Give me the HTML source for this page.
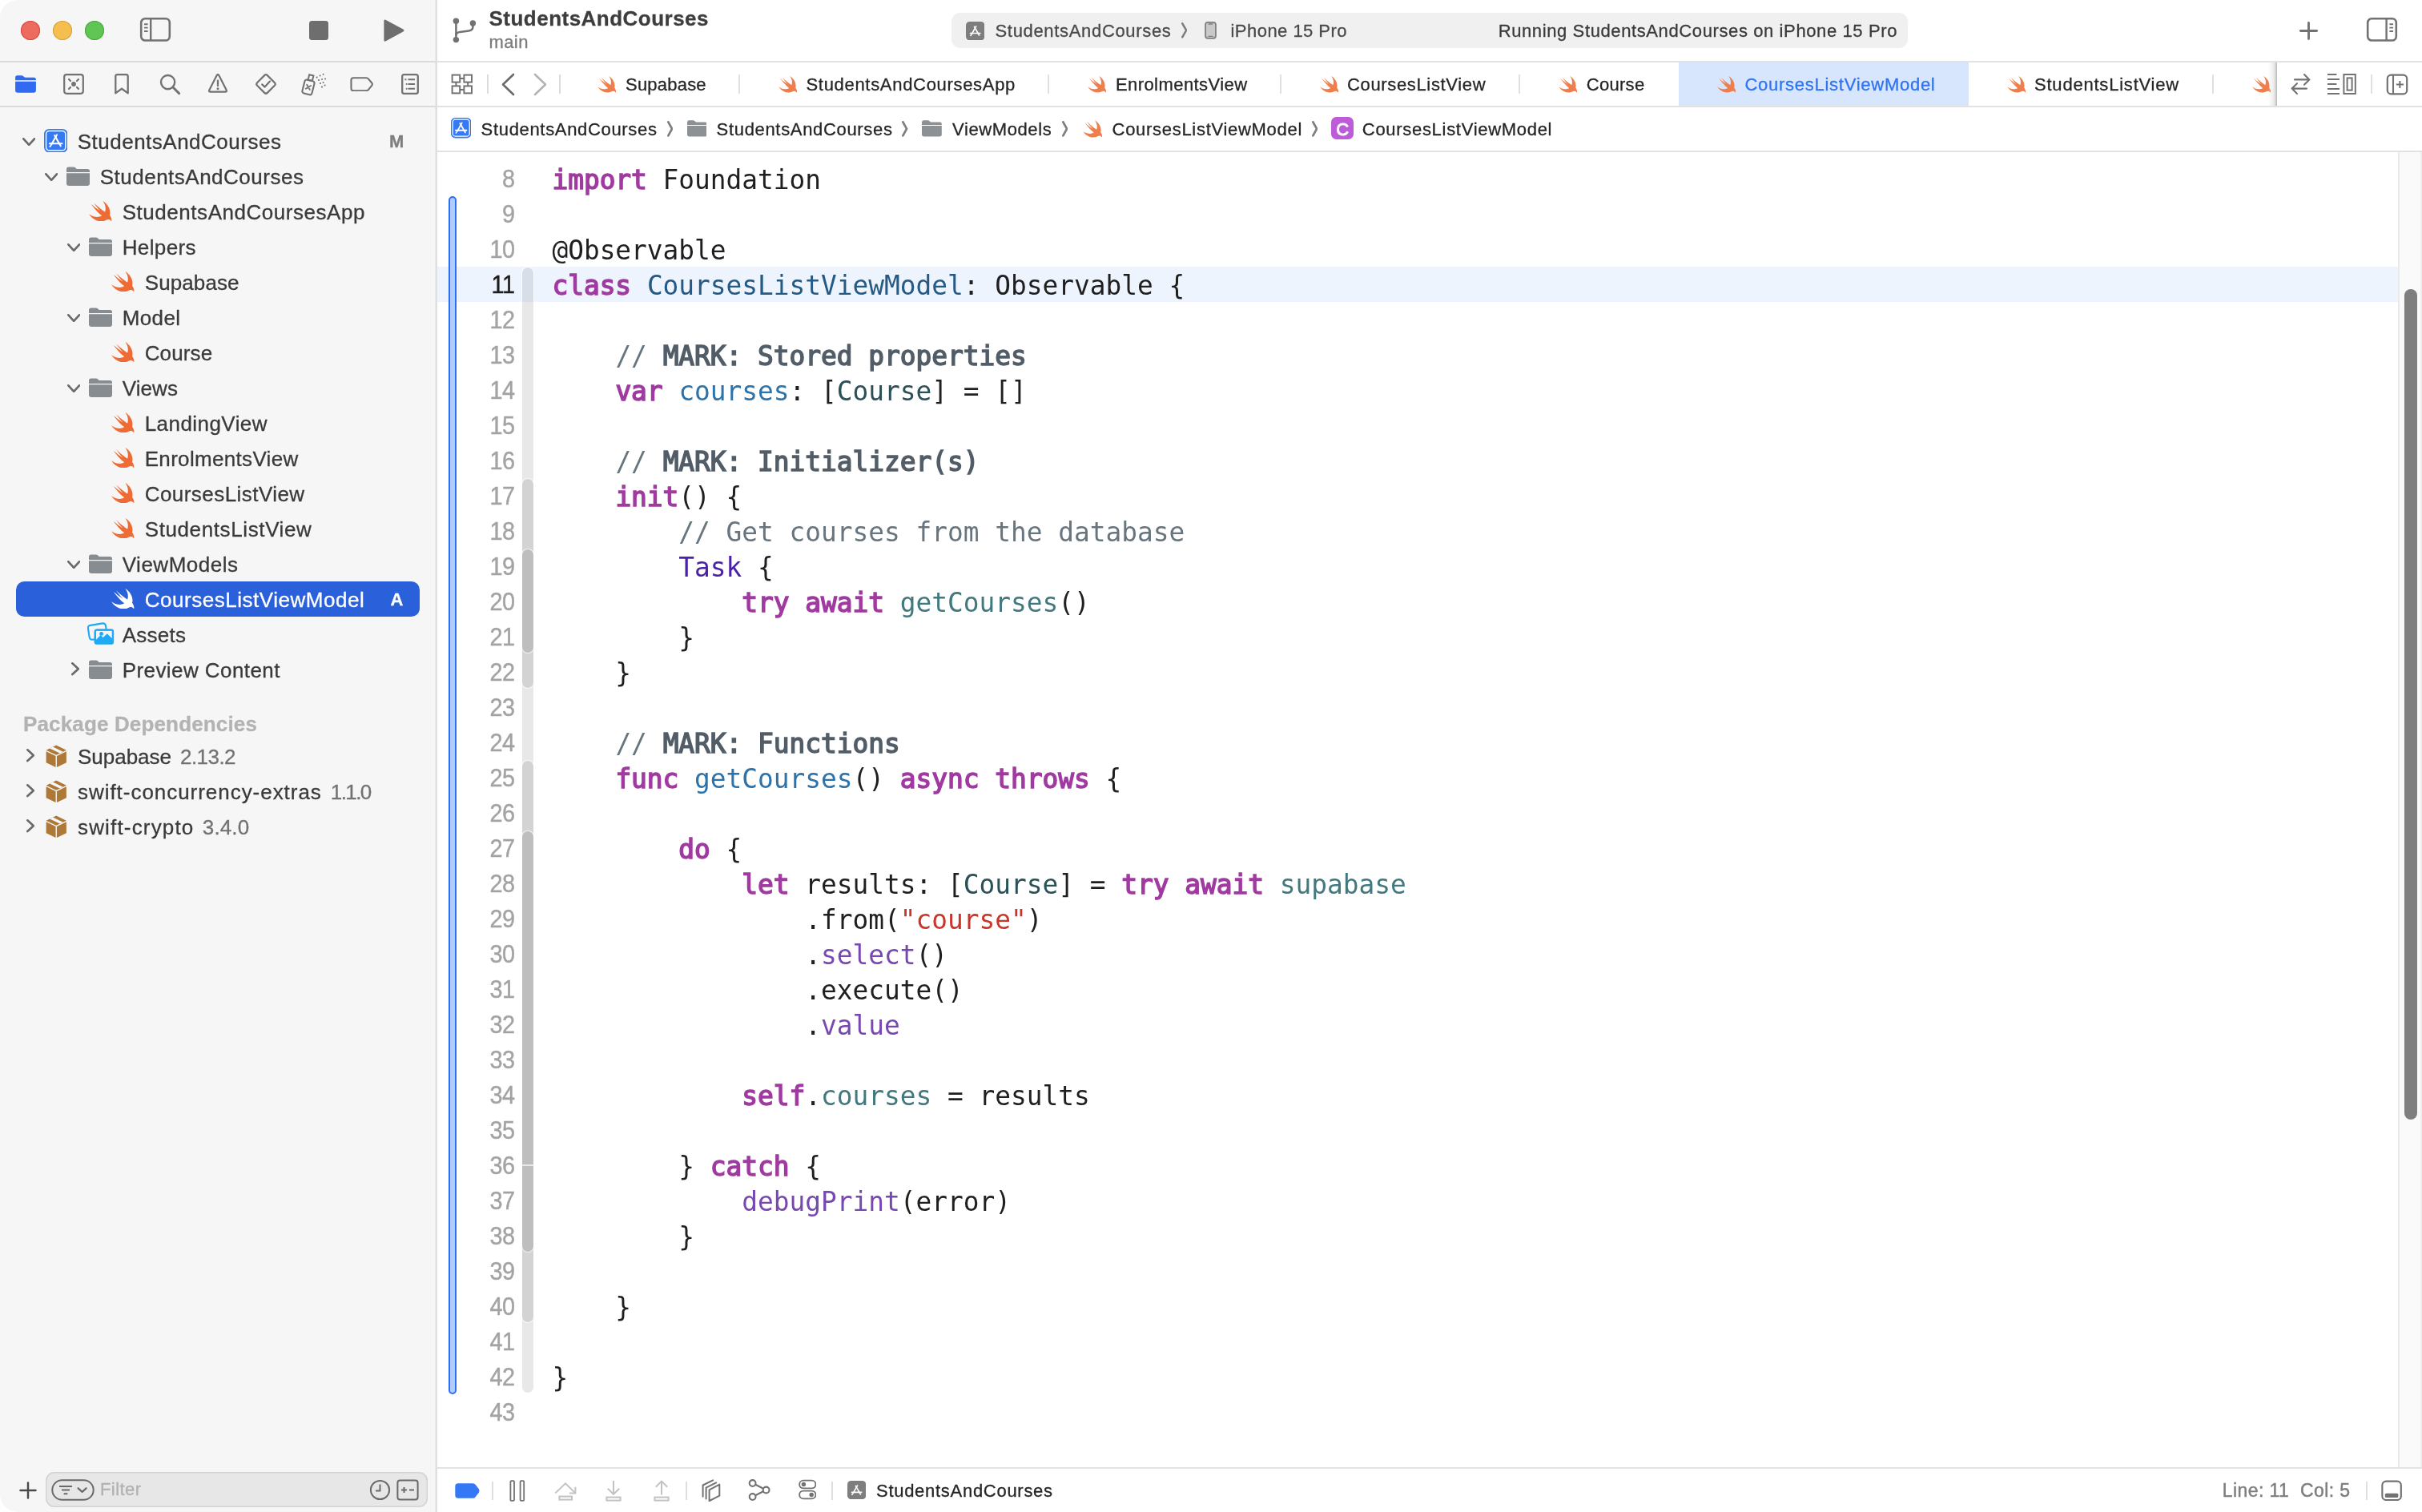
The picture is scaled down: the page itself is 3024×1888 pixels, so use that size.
<!DOCTYPE html>
<html lang="en"><head><meta charset="utf-8"><title>StudentsAndCourses — CoursesListViewModel.swift</title>
<style>
html,body{margin:0;padding:0;background:#fff;}
body{width:3024px;height:1888px;overflow:hidden;font-family:"Liberation Sans", sans-serif;}
#win{transform:translateZ(0);will-change:transform;position:relative;width:3024px;height:1888px;overflow:hidden;border-radius:22px;background:#fff;}
#win>div,#win>svg,#win>span{position:absolute;display:block;}
.t{white-space:pre;-webkit-text-stroke:0.3px;}
.ln{left:546px;width:96.4px;margin-top:0px;height:44px;line-height:44px;text-align:right;font-size:32px;color:#a3a3a3;letter-spacing:-0.6px;transform:scaleX(0.9);transform-origin:100% 50%;-webkit-text-stroke:0.45px;}
.ln.cur{color:#1d1d1f;}
.cl{left:689.4px;margin-top:1.5px;height:44px;line-height:44px;white-space:pre;font-family:"DejaVu Sans Mono", "Liberation Mono", monospace;font-size:32.8px;color:#1f1f1f;}
.kw{color:#a03aa0;-webkit-text-stroke:1.5px #a03aa0;}
.tyd{color:#245a85;} .decl{color:#2b73aa;} .ptype{color:#2a5157;} .pfn{color:#42797f;}
.ocls{color:#4a22a8;} .ofn{color:#7747b2;} .str{color:#c9362a;} .com{color:#67757f;} .mark{color:#525d68;-webkit-text-stroke:1.5px #525d68;}
</style></head>
<body><div id="win">
<div style="left:0px;top:0px;width:544px;height:1888px;background:#f6f6f6"></div>
<div style="left:543px;top:0px;width:3px;height:1888px;background:linear-gradient(90deg,#eeeeee,#dedede 60%,#dcdcdc)"></div>
<div style="left:0px;top:76px;width:544px;height:2px;background:#dadada"></div>
<div style="left:546px;top:76px;width:2478px;height:2px;background:#e2e2e2"></div>
<div style="left:0px;top:132px;width:544px;height:2px;background:#dadada"></div>
<div style="left:546px;top:132px;width:2478px;height:2px;background:#e2e2e2"></div>
<div style="left:546px;top:188px;width:2478px;height:2px;background:#e2e2e2"></div>
<div style="left:546px;top:1832px;width:2478px;height:2px;background:#e2e2e2"></div>
<div style="left:26px;top:26px;width:24px;height:24px;border-radius:50%;background:#ed6a5f;box-shadow:inset 0 0 0 1px #d5493c"></div>
<div style="left:66px;top:26px;width:24px;height:24px;border-radius:50%;background:#f5bf4f;box-shadow:inset 0 0 0 1px #d6a13a"></div>
<div style="left:106px;top:26px;width:24px;height:24px;border-radius:50%;background:#61c555;box-shadow:inset 0 0 0 1px #4ca73d"></div>
<svg style="left:174px;top:21px" width="40" height="32" viewBox="0 0 40 32" ><rect x="2.2" y="2.3" width="35.6" height="27.2" rx="5" fill="none" stroke="#727272" stroke-width="2.6"/><path d="M14.2 2.5V29.5" stroke="#727272" stroke-width="2.4"/><path d="M6 9.2H10.6M6 13.6H10.6M6 18H10.6" stroke="#727272" stroke-width="1.9"/></svg>
<div style="left:386px;top:26px;width:24px;height:24px;background:#6e6e6e;border-radius:3.5px"></div>
<svg style="left:477px;top:22.6px" width="30" height="30.8" viewBox="0 0 29 30" ><path d="M2.2 3.2Q2.2 0.6 4.6 1.9L25.6 13.2Q27.8 14.6 25.6 16L4.6 27.6Q2.2 28.8 2.2 26.2Z" fill="#6e6e6e"/></svg>
<svg style="left:563px;top:21px" width="34" height="34" viewBox="0 0 34 34" ><g fill="none" stroke="#727272" stroke-width="2.5"><path d="M6.4 7.5V26.5"/><path d="M27.4 10.4V12.6Q27.4 17 22.4 17.6L11 19Q6.4 19.6 6.4 23.4"/></g><circle cx="6.4" cy="5.2" r="3.7" fill="#727272"/><circle cx="6.4" cy="28.6" r="3.7" fill="#727272"/><circle cx="27.4" cy="8" r="3.7" fill="#727272"/></svg>
<span class="t" style="left:610.5px;top:10.19px;font-size:26px;line-height:26px;color:#3d3d3d;font-weight:700;letter-spacing:0.483px;">StudentsAndCourses</span>
<span class="t" style="left:610.5px;top:41.88px;font-size:22px;line-height:22px;color:#7b7b7b;letter-spacing:0.4px;">main</span>
<div style="left:1188px;top:16px;width:1194px;height:43.5px;background:#f0f0f0;border-radius:11px"></div>
<svg style="left:1206px;top:26.5px" width="23.4" height="23.4" viewBox="0 0 30 30" ><rect x="0" y="0" width="30" height="30" rx="6" fill="#7e7e7e"/><g stroke="#fff" stroke-width="2.1" stroke-linecap="round" fill="none"><path d="M16.3 7.6L9.2 20.2"/><path d="M13.4 8.2L21.2 21.8"/><path d="M7 18.6H23"/><path d="M8.2 21.4L7.6 22.4"/></g></svg>
<span class="t" style="left:1242.5px;top:28.38px;font-size:22px;line-height:22px;color:#4a4a4a;letter-spacing:0.672px;">StudentsAndCourses</span>
<svg style="left:1475px;top:28.2px" width="7.4" height="19.6" viewBox="0 0 7.4 19.6" ><path d="M1.25 1.25L6.15 9.8L1.25 18.35" fill="none" stroke="#7c7c7c" stroke-width="2.5" stroke-linecap="round" stroke-linejoin="round"/></svg>
<svg style="left:1504.4px;top:26.3px" width="15" height="23.6" viewBox="0 0 17 25" ><rect x="1.2" y="1.2" width="14.6" height="22.6" rx="3.4" fill="#c9c9c9" stroke="#7e7e7e" stroke-width="2"/><path d="M6 3.6H11" stroke="#7e7e7e" stroke-width="1.6" stroke-linecap="round"/><path d="M5.4 21H11.6" stroke="#7e7e7e" stroke-width="1.4" stroke-linecap="round"/></svg>
<span class="t" style="left:1536.5px;top:28.38px;font-size:22px;line-height:22px;color:#4a4a4a;letter-spacing:0.466px;">iPhone 15 Pro</span>
<span class="t" style="left:1870.7px;top:28.38px;font-size:22px;line-height:22px;color:#3a3a3a;letter-spacing:0.609px;">Running StudentsAndCourses on iPhone 15 Pro</span>
<svg style="left:2869.5px;top:25.5px" width="25" height="25" viewBox="0 0 25 25" ><path d="M12.5 2.4V22.6M2.4 12.5H22.6" stroke="#727272" stroke-width="2.9" stroke-linecap="round"/></svg>
<svg style="left:2954px;top:21px" width="40" height="32" viewBox="0 0 40 32" ><rect x="2.2" y="2.3" width="35.6" height="27.2" rx="5" fill="none" stroke="#727272" stroke-width="2.6"/><path d="M25.6 2.5V29.5" stroke="#727272" stroke-width="2.4"/><path d="M29.4 9.2H34M29.4 13.6H34M29.4 18H34" stroke="#727272" stroke-width="1.9"/></svg>
<svg style="left:19px;top:94px" width="26" height="22" viewBox="0 0 27 23" ><path d="M0 3Q0 0.2 2.8 0.2H8Q9.6 0.2 10.6 1.2L11.4 2Q12.2 2.8 13.4 2.8H24.2Q27 2.8 27 5.6V6.6H0Z" fill="#2f6af0"/><path d="M0 8H27V19.6Q27 22.8 23.8 22.8H3.2Q0 22.8 0 19.6Z" fill="#2f6af0"/></svg>
<svg style="left:78px;top:91px" width="28" height="28" viewBox="0 0 28 28" ><rect x="2.2" y="2.2" width="23.6" height="23.6" rx="3" fill="none" stroke="#727272" stroke-width="2.2"/><path d="M8 8L10 10M20 8L18 10M8 20L10 18M20 20L18 18" stroke="#727272" stroke-width="2.2" stroke-linecap="round"/><circle cx="14" cy="14" r="2.9" fill="#727272"/></svg>
<svg style="left:142px;top:91px" width="20" height="28" viewBox="0 0 20 28" ><path d="M2.3 4.4Q2.3 2.2 4.5 2.2H15.5Q17.7 2.2 17.7 4.4V25.4L10 19.8L2.3 25.4Z" fill="none" stroke="#727272" stroke-width="2.3" stroke-linejoin="round"/></svg>
<svg style="left:198.5px;top:91.5px" width="27" height="27" viewBox="0 0 27 27" ><circle cx="10.6" cy="10.6" r="8.6" fill="none" stroke="#727272" stroke-width="2.4"/><path d="M17 17L24.6 24.6" stroke="#727272" stroke-width="2.9" stroke-linecap="round"/></svg>
<svg style="left:259px;top:91px" width="26" height="26" viewBox="0 0 26 26" ><path d="M13 2.2Q13.8 2.2 14.3 3.1L23.7 21.5Q24.6 23.6 22.4 23.6H3.6Q1.4 23.6 2.3 21.5L11.7 3.1Q12.2 2.2 13 2.2Z" fill="none" stroke="#727272" stroke-width="2.2" stroke-linejoin="round"/><path d="M13 9.6V16" stroke="#727272" stroke-width="2.3" stroke-linecap="round"/><circle cx="13" cy="19.8" r="1.5" fill="#727272"/></svg>
<svg style="left:318px;top:91px" width="28" height="28" viewBox="0 0 28 28" ><path d="M14 2.2Q14.9 2.2 15.8 3.1L24.9 12.2Q26.6 14 24.9 15.8L15.8 24.9Q14 26.6 12.2 24.9L3.1 15.8Q1.4 14 3.1 12.2L12.2 3.1Q13.1 2.2 14 2.2Z" fill="none" stroke="#727272" stroke-width="2.2"/><path d="M9.2 14.4L12.6 17.6L19 10.6" fill="none" stroke="#727272" stroke-width="2.2" stroke-linecap="round" stroke-linejoin="round"/></svg>
<svg style="left:376px;top:90.5px" width="32" height="29" viewBox="0 0 32 29" ><g transform="rotate(14 9 17)"><rect x="3" y="9.2" width="12.4" height="17.4" rx="2.6" fill="none" stroke="#727272" stroke-width="2.1"/><rect x="6.6" y="2.4" width="5.4" height="6.6" fill="none" stroke="#727272" stroke-width="2"/><path d="M6.6 15.2L11.8 20.4M11.8 15.2L6.6 20.4" stroke="#727272" stroke-width="1.8" stroke-linecap="round"/></g><g fill="#727272"><circle cx="19.6" cy="5.6" r="1.1"/><circle cx="23.6" cy="3.6" r="1"/><circle cx="27.6" cy="1.8" r="1"/><circle cx="22" cy="9" r="1.1"/><circle cx="26" cy="8" r="1"/><circle cx="30" cy="7.6" r="1"/><circle cx="24" cy="13" r="1.1"/><circle cx="27.6" cy="12" r="1"/><circle cx="29.6" cy="15.4" r="1"/><circle cx="26" cy="17.6" r="1.1"/></g></svg>
<svg style="left:437px;top:96px" width="30" height="18.4" viewBox="0 0 32 20" ><path d="M4.2 1.3H21.8Q23.6 1.3 24.8 2.8L29.4 8.4Q30.6 10 29.4 11.6L24.8 17.2Q23.6 18.7 21.8 18.7H4.2Q1.3 18.7 1.3 15.8V4.2Q1.3 1.3 4.2 1.3Z" fill="none" stroke="#727272" stroke-width="2.3"/></svg>
<svg style="left:500px;top:91px" width="24" height="28" viewBox="0 0 24 28" ><rect x="2.2" y="2.2" width="19.6" height="23.6" rx="2.4" fill="none" stroke="#727272" stroke-width="2.3"/><path d="M9.4 8.2H18M9.4 14H18M9.4 19.8H18" stroke="#727272" stroke-width="2"/><path d="M5.4 8.2H7.4M6.8 14H8.4M6.8 19.8H8.4" stroke="#727272" stroke-width="2"/></svg>
<svg style="left:27.8px;top:171.9px" width="16.4" height="10.2" viewBox="0 0 16.4 10.2" ><path d="M1.35 1.35L8.2 8.85L15.049999999999999 1.35" fill="none" stroke="#6a6a6a" stroke-width="2.7" stroke-linecap="round" stroke-linejoin="round"/></svg>
<svg style="left:54.5px;top:160.7px" width="29.4" height="29.4" viewBox="0 0 30 30" ><rect x="0" y="0" width="30" height="30" rx="6.5" fill="#3579f3"/><rect x="2.6" y="2.6" width="24.8" height="24.8" rx="4.2" fill="none" stroke="#fff" stroke-width="1.5"/><g stroke="#fff" stroke-width="2.1" stroke-linecap="round" fill="none"><path d="M16.3 7.6L9.2 20.2"/><path d="M13.4 8.2L21.2 21.8"/><path d="M7 18.6H23"/><path d="M8.2 21.4L7.6 22.4"/></g></svg>
<span class="t" style="left:96.7px;top:163.59px;font-size:26px;line-height:26px;color:#3a3a3a;letter-spacing:0.499px;">StudentsAndCourses</span>
<span class="t" style="left:486px;top:166.38px;font-size:22px;line-height:22px;color:#7f7f7f;font-weight:700;">M</span>
<svg style="left:55.8px;top:215.9px" width="16.4" height="10.2" viewBox="0 0 16.4 10.2" ><path d="M1.35 1.35L8.2 8.85L15.049999999999999 1.35" fill="none" stroke="#6a6a6a" stroke-width="2.7" stroke-linecap="round" stroke-linejoin="round"/></svg>
<svg style="left:83.0px;top:208.0px" width="29" height="24.0" viewBox="0 0 29 24" ><path d="M0 3.2Q0 0.4 2.8 0.4H8.6Q10.2 0.4 11.2 1.4L12.2 2.4Q12.9 3 14 3H26.2Q29 3 29 5.8V7H0Z" fill="#878c91"/><path d="M0 8.3H29V20.8Q29 24 25.8 24H3.2Q0 24 0 20.8Z" fill="#878c91"/></svg>
<span class="t" style="left:124.7px;top:207.59px;font-size:26px;line-height:26px;color:#3a3a3a;letter-spacing:0.499px;">StudentsAndCourses</span>
<svg style="left:111.4px;top:250.71px" width="28.6" height="25.79" viewBox="2.38 3.38 18.3 16.5" ><path d="M13.543 3.41c4.114 2.47 6.545 7.162 5.549 11.131-.024.093-.05.181-.076.272l.002.001c2.062 2.538 1.5 5.258 1.236 4.745-1.072-2.086-3.066-1.568-4.088-1.043a6.803 6.803 0 0 1-.281.158l-.02.012-.002.002c-2.115 1.123-4.957 1.205-7.812-.022a12.568 12.568 0 0 1-5.64-4.838c.649.48 1.35.902 2.097 1.252 3.019 1.414 6.051 1.311 8.197-.002C9.651 12.73 7.101 9.67 5.146 7.191a10.628 10.628 0 0 1-1.005-1.384c2.34 2.142 6.038 4.83 7.365 5.576C8.69 8.408 6.208 4.743 6.324 4.86c4.436 4.47 8.528 6.996 8.528 6.996.154.085.27.154.36.214.085-.215.16-.437.224-.668.708-2.588-.09-5.548-1.893-7.992z" fill="#ef6b36"/></svg>
<span class="t" style="left:152.7px;top:251.59px;font-size:26px;line-height:26px;color:#3a3a3a;letter-spacing:0.54px;">StudentsAndCoursesApp</span>
<svg style="left:83.8px;top:303.9px" width="16.4" height="10.2" viewBox="0 0 16.4 10.2" ><path d="M1.35 1.35L8.2 8.85L15.049999999999999 1.35" fill="none" stroke="#6a6a6a" stroke-width="2.7" stroke-linecap="round" stroke-linejoin="round"/></svg>
<svg style="left:111.0px;top:296.0px" width="29" height="24.0" viewBox="0 0 29 24" ><path d="M0 3.2Q0 0.4 2.8 0.4H8.6Q10.2 0.4 11.2 1.4L12.2 2.4Q12.9 3 14 3H26.2Q29 3 29 5.8V7H0Z" fill="#878c91"/><path d="M0 8.3H29V20.8Q29 24 25.8 24H3.2Q0 24 0 20.8Z" fill="#878c91"/></svg>
<span class="t" style="left:152.7px;top:295.59px;font-size:26px;line-height:26px;color:#3a3a3a;letter-spacing:0.372px;">Helpers</span>
<svg style="left:139.4px;top:338.71px" width="28.6" height="25.79" viewBox="2.38 3.38 18.3 16.5" ><path d="M13.543 3.41c4.114 2.47 6.545 7.162 5.549 11.131-.024.093-.05.181-.076.272l.002.001c2.062 2.538 1.5 5.258 1.236 4.745-1.072-2.086-3.066-1.568-4.088-1.043a6.803 6.803 0 0 1-.281.158l-.02.012-.002.002c-2.115 1.123-4.957 1.205-7.812-.022a12.568 12.568 0 0 1-5.64-4.838c.649.48 1.35.902 2.097 1.252 3.019 1.414 6.051 1.311 8.197-.002C9.651 12.73 7.101 9.67 5.146 7.191a10.628 10.628 0 0 1-1.005-1.384c2.34 2.142 6.038 4.83 7.365 5.576C8.69 8.408 6.208 4.743 6.324 4.86c4.436 4.47 8.528 6.996 8.528 6.996.154.085.27.154.36.214.085-.215.16-.437.224-.668.708-2.588-.09-5.548-1.893-7.992z" fill="#ef6b36"/></svg>
<span class="t" style="left:180.7px;top:339.59px;font-size:26px;line-height:26px;color:#3a3a3a;letter-spacing:0.111px;">Supabase</span>
<svg style="left:83.8px;top:391.9px" width="16.4" height="10.2" viewBox="0 0 16.4 10.2" ><path d="M1.35 1.35L8.2 8.85L15.049999999999999 1.35" fill="none" stroke="#6a6a6a" stroke-width="2.7" stroke-linecap="round" stroke-linejoin="round"/></svg>
<svg style="left:111.0px;top:384.0px" width="29" height="24.0" viewBox="0 0 29 24" ><path d="M0 3.2Q0 0.4 2.8 0.4H8.6Q10.2 0.4 11.2 1.4L12.2 2.4Q12.9 3 14 3H26.2Q29 3 29 5.8V7H0Z" fill="#878c91"/><path d="M0 8.3H29V20.8Q29 24 25.8 24H3.2Q0 24 0 20.8Z" fill="#878c91"/></svg>
<span class="t" style="left:152.7px;top:383.59px;font-size:26px;line-height:26px;color:#3a3a3a;letter-spacing:0.394px;">Model</span>
<svg style="left:139.4px;top:426.71px" width="28.6" height="25.79" viewBox="2.38 3.38 18.3 16.5" ><path d="M13.543 3.41c4.114 2.47 6.545 7.162 5.549 11.131-.024.093-.05.181-.076.272l.002.001c2.062 2.538 1.5 5.258 1.236 4.745-1.072-2.086-3.066-1.568-4.088-1.043a6.803 6.803 0 0 1-.281.158l-.02.012-.002.002c-2.115 1.123-4.957 1.205-7.812-.022a12.568 12.568 0 0 1-5.64-4.838c.649.48 1.35.902 2.097 1.252 3.019 1.414 6.051 1.311 8.197-.002C9.651 12.73 7.101 9.67 5.146 7.191a10.628 10.628 0 0 1-1.005-1.384c2.34 2.142 6.038 4.83 7.365 5.576C8.69 8.408 6.208 4.743 6.324 4.86c4.436 4.47 8.528 6.996 8.528 6.996.154.085.27.154.36.214.085-.215.16-.437.224-.668.708-2.588-.09-5.548-1.893-7.992z" fill="#ef6b36"/></svg>
<span class="t" style="left:180.7px;top:427.59px;font-size:26px;line-height:26px;color:#3a3a3a;letter-spacing:0.145px;">Course</span>
<svg style="left:83.8px;top:479.9px" width="16.4" height="10.2" viewBox="0 0 16.4 10.2" ><path d="M1.35 1.35L8.2 8.85L15.049999999999999 1.35" fill="none" stroke="#6a6a6a" stroke-width="2.7" stroke-linecap="round" stroke-linejoin="round"/></svg>
<svg style="left:111.0px;top:472.0px" width="29" height="24.0" viewBox="0 0 29 24" ><path d="M0 3.2Q0 0.4 2.8 0.4H8.6Q10.2 0.4 11.2 1.4L12.2 2.4Q12.9 3 14 3H26.2Q29 3 29 5.8V7H0Z" fill="#878c91"/><path d="M0 8.3H29V20.8Q29 24 25.8 24H3.2Q0 24 0 20.8Z" fill="#878c91"/></svg>
<span class="t" style="left:152.7px;top:471.59px;font-size:26px;line-height:26px;color:#3a3a3a;letter-spacing:0.102px;">Views</span>
<svg style="left:139.4px;top:514.71px" width="28.6" height="25.79" viewBox="2.38 3.38 18.3 16.5" ><path d="M13.543 3.41c4.114 2.47 6.545 7.162 5.549 11.131-.024.093-.05.181-.076.272l.002.001c2.062 2.538 1.5 5.258 1.236 4.745-1.072-2.086-3.066-1.568-4.088-1.043a6.803 6.803 0 0 1-.281.158l-.02.012-.002.002c-2.115 1.123-4.957 1.205-7.812-.022a12.568 12.568 0 0 1-5.64-4.838c.649.48 1.35.902 2.097 1.252 3.019 1.414 6.051 1.311 8.197-.002C9.651 12.73 7.101 9.67 5.146 7.191a10.628 10.628 0 0 1-1.005-1.384c2.34 2.142 6.038 4.83 7.365 5.576C8.69 8.408 6.208 4.743 6.324 4.86c4.436 4.47 8.528 6.996 8.528 6.996.154.085.27.154.36.214.085-.215.16-.437.224-.668.708-2.588-.09-5.548-1.893-7.992z" fill="#ef6b36"/></svg>
<span class="t" style="left:180.7px;top:515.59px;font-size:26px;line-height:26px;color:#3a3a3a;letter-spacing:0.443px;">LandingView</span>
<svg style="left:139.4px;top:558.71px" width="28.6" height="25.79" viewBox="2.38 3.38 18.3 16.5" ><path d="M13.543 3.41c4.114 2.47 6.545 7.162 5.549 11.131-.024.093-.05.181-.076.272l.002.001c2.062 2.538 1.5 5.258 1.236 4.745-1.072-2.086-3.066-1.568-4.088-1.043a6.803 6.803 0 0 1-.281.158l-.02.012-.002.002c-2.115 1.123-4.957 1.205-7.812-.022a12.568 12.568 0 0 1-5.64-4.838c.649.48 1.35.902 2.097 1.252 3.019 1.414 6.051 1.311 8.197-.002C9.651 12.73 7.101 9.67 5.146 7.191a10.628 10.628 0 0 1-1.005-1.384c2.34 2.142 6.038 4.83 7.365 5.576C8.69 8.408 6.208 4.743 6.324 4.86c4.436 4.47 8.528 6.996 8.528 6.996.154.085.27.154.36.214.085-.215.16-.437.224-.668.708-2.588-.09-5.548-1.893-7.992z" fill="#ef6b36"/></svg>
<span class="t" style="left:180.7px;top:559.59px;font-size:26px;line-height:26px;color:#3a3a3a;letter-spacing:0.322px;">EnrolmentsView</span>
<svg style="left:139.4px;top:602.71px" width="28.6" height="25.79" viewBox="2.38 3.38 18.3 16.5" ><path d="M13.543 3.41c4.114 2.47 6.545 7.162 5.549 11.131-.024.093-.05.181-.076.272l.002.001c2.062 2.538 1.5 5.258 1.236 4.745-1.072-2.086-3.066-1.568-4.088-1.043a6.803 6.803 0 0 1-.281.158l-.02.012-.002.002c-2.115 1.123-4.957 1.205-7.812-.022a12.568 12.568 0 0 1-5.64-4.838c.649.48 1.35.902 2.097 1.252 3.019 1.414 6.051 1.311 8.197-.002C9.651 12.73 7.101 9.67 5.146 7.191a10.628 10.628 0 0 1-1.005-1.384c2.34 2.142 6.038 4.83 7.365 5.576C8.69 8.408 6.208 4.743 6.324 4.86c4.436 4.47 8.528 6.996 8.528 6.996.154.085.27.154.36.214.085-.215.16-.437.224-.668.708-2.588-.09-5.548-1.893-7.992z" fill="#ef6b36"/></svg>
<span class="t" style="left:180.7px;top:603.59px;font-size:26px;line-height:26px;color:#3a3a3a;letter-spacing:0.449px;">CoursesListView</span>
<svg style="left:139.4px;top:646.71px" width="28.6" height="25.79" viewBox="2.38 3.38 18.3 16.5" ><path d="M13.543 3.41c4.114 2.47 6.545 7.162 5.549 11.131-.024.093-.05.181-.076.272l.002.001c2.062 2.538 1.5 5.258 1.236 4.745-1.072-2.086-3.066-1.568-4.088-1.043a6.803 6.803 0 0 1-.281.158l-.02.012-.002.002c-2.115 1.123-4.957 1.205-7.812-.022a12.568 12.568 0 0 1-5.64-4.838c.649.48 1.35.902 2.097 1.252 3.019 1.414 6.051 1.311 8.197-.002C9.651 12.73 7.101 9.67 5.146 7.191a10.628 10.628 0 0 1-1.005-1.384c2.34 2.142 6.038 4.83 7.365 5.576C8.69 8.408 6.208 4.743 6.324 4.86c4.436 4.47 8.528 6.996 8.528 6.996.154.085.27.154.36.214.085-.215.16-.437.224-.668.708-2.588-.09-5.548-1.893-7.992z" fill="#ef6b36"/></svg>
<span class="t" style="left:180.7px;top:647.59px;font-size:26px;line-height:26px;color:#3a3a3a;letter-spacing:0.613px;">StudentsListView</span>
<svg style="left:83.8px;top:699.9px" width="16.4" height="10.2" viewBox="0 0 16.4 10.2" ><path d="M1.35 1.35L8.2 8.85L15.049999999999999 1.35" fill="none" stroke="#6a6a6a" stroke-width="2.7" stroke-linecap="round" stroke-linejoin="round"/></svg>
<svg style="left:111.0px;top:692.0px" width="29" height="24.0" viewBox="0 0 29 24" ><path d="M0 3.2Q0 0.4 2.8 0.4H8.6Q10.2 0.4 11.2 1.4L12.2 2.4Q12.9 3 14 3H26.2Q29 3 29 5.8V7H0Z" fill="#878c91"/><path d="M0 8.3H29V20.8Q29 24 25.8 24H3.2Q0 24 0 20.8Z" fill="#878c91"/></svg>
<span class="t" style="left:152.7px;top:691.59px;font-size:26px;line-height:26px;color:#3a3a3a;letter-spacing:0.52px;">ViewModels</span>
<div style="left:20px;top:726px;width:504px;height:44px;background:#2a60da;border-radius:10.5px"></div>
<svg style="left:139.4px;top:734.71px" width="28.6" height="25.79" viewBox="2.38 3.38 18.3 16.5" ><path d="M13.543 3.41c4.114 2.47 6.545 7.162 5.549 11.131-.024.093-.05.181-.076.272l.002.001c2.062 2.538 1.5 5.258 1.236 4.745-1.072-2.086-3.066-1.568-4.088-1.043a6.803 6.803 0 0 1-.281.158l-.02.012-.002.002c-2.115 1.123-4.957 1.205-7.812-.022a12.568 12.568 0 0 1-5.64-4.838c.649.48 1.35.902 2.097 1.252 3.019 1.414 6.051 1.311 8.197-.002C9.651 12.73 7.101 9.67 5.146 7.191a10.628 10.628 0 0 1-1.005-1.384c2.34 2.142 6.038 4.83 7.365 5.576C8.69 8.408 6.208 4.743 6.324 4.86c4.436 4.47 8.528 6.996 8.528 6.996.154.085.27.154.36.214.085-.215.16-.437.224-.668.708-2.588-.09-5.548-1.893-7.992z" fill="#ffffff"/></svg>
<span class="t" style="left:180.7px;top:735.59px;font-size:26px;line-height:26px;color:#ffffff;letter-spacing:0.531px;">CoursesListViewModel</span>
<span class="t" style="left:487.5px;top:738.38px;font-size:22px;line-height:22px;color:#ffffff;font-weight:700;">A</span>
<svg style="left:109.0px;top:777.1px" width="35" height="29.7" viewBox="0 0 33 28" ><g transform="rotate(-9 12 11)"><rect x="1.6" y="2.4" width="21" height="17" rx="3" fill="#f6f6f6" stroke="#1eaaf5" stroke-width="2"/></g><rect x="8.2" y="8" width="23" height="18" rx="3" fill="#1eaaf5"/><path d="M10.4 20.6L15.6 15.2L18.6 18L23.4 13.4L29 18.8V10.2H10.4Z" fill="#f6f6f6"/><rect x="9.2" y="9" width="21" height="16" rx="2.2" fill="none" stroke="#1eaaf5" stroke-width="2"/><circle cx="16.6" cy="13.6" r="2.3" fill="#1eaaf5"/></svg>
<span class="t" style="left:152.7px;top:779.59px;font-size:26px;line-height:26px;color:#3a3a3a;letter-spacing:0.245px;">Assets</span>
<svg style="left:88.9px;top:827.3px" width="10.2" height="16.4" viewBox="0 0 10.2 16.4" ><path d="M1.35 1.35L8.85 8.2L1.35 15.049999999999999" fill="none" stroke="#6a6a6a" stroke-width="2.7" stroke-linecap="round" stroke-linejoin="round"/></svg>
<svg style="left:111.0px;top:824.0px" width="29" height="24.0" viewBox="0 0 29 24" ><path d="M0 3.2Q0 0.4 2.8 0.4H8.6Q10.2 0.4 11.2 1.4L12.2 2.4Q12.9 3 14 3H26.2Q29 3 29 5.8V7H0Z" fill="#878c91"/><path d="M0 8.3H29V20.8Q29 24 25.8 24H3.2Q0 24 0 20.8Z" fill="#878c91"/></svg>
<span class="t" style="left:152.7px;top:823.59px;font-size:26px;line-height:26px;color:#3a3a3a;letter-spacing:0.429px;">Preview Content</span>
<span class="t" style="left:29px;top:890.59px;font-size:26px;line-height:26px;color:#b3b3b3;font-weight:700;letter-spacing:0.148px;">Package Dependencies</span>
<svg style="left:32.9px;top:935.3px" width="10.2" height="16.4" viewBox="0 0 10.2 16.4" ><path d="M1.35 1.35L8.85 8.2L1.35 15.049999999999999" fill="none" stroke="#6a6a6a" stroke-width="2.7" stroke-linecap="round" stroke-linejoin="round"/></svg>
<svg style="left:56.75px;top:930.23px" width="26.5" height="28.54" viewBox="0 0 26 28" ><path d="M13 0.5L25.4 6.6L13 12.4L0.6 6.6Z" fill="#ad7838"/><path d="M0.6 8.1L12.3 13.7V27.5L0.6 21.8Z" fill="#ad7838"/><path d="M25.4 8.1L13.7 13.7V27.5L25.4 21.8Z" fill="#ad7838"/><path d="M8.9 2.5L21.3 8.5L17.4 10.4L5 4.4Z" fill="#f6f6f6"/></svg>
<span class="t" style="left:97px;top:931.59px;font-size:26px;line-height:26px;color:#3a3a3a;letter-spacing:-0.014px;">Supabase</span>
<span class="t" style="left:225px;top:931.59px;font-size:26px;line-height:26px;color:#737373;letter-spacing:-0.549px;">2.13.2</span>
<svg style="left:32.9px;top:979.3px" width="10.2" height="16.4" viewBox="0 0 10.2 16.4" ><path d="M1.35 1.35L8.85 8.2L1.35 15.049999999999999" fill="none" stroke="#6a6a6a" stroke-width="2.7" stroke-linecap="round" stroke-linejoin="round"/></svg>
<svg style="left:56.75px;top:974.23px" width="26.5" height="28.54" viewBox="0 0 26 28" ><path d="M13 0.5L25.4 6.6L13 12.4L0.6 6.6Z" fill="#ad7838"/><path d="M0.6 8.1L12.3 13.7V27.5L0.6 21.8Z" fill="#ad7838"/><path d="M25.4 8.1L13.7 13.7V27.5L25.4 21.8Z" fill="#ad7838"/><path d="M8.9 2.5L21.3 8.5L17.4 10.4L5 4.4Z" fill="#f6f6f6"/></svg>
<span class="t" style="left:97px;top:975.59px;font-size:26px;line-height:26px;color:#3a3a3a;letter-spacing:0.961px;">swift-concurrency-extras</span>
<span class="t" style="left:412.8px;top:975.59px;font-size:26px;line-height:26px;color:#737373;letter-spacing:-1.586px;">1.1.0</span>
<svg style="left:32.9px;top:1023.3px" width="10.2" height="16.4" viewBox="0 0 10.2 16.4" ><path d="M1.35 1.35L8.85 8.2L1.35 15.049999999999999" fill="none" stroke="#6a6a6a" stroke-width="2.7" stroke-linecap="round" stroke-linejoin="round"/></svg>
<svg style="left:56.75px;top:1018.23px" width="26.5" height="28.54" viewBox="0 0 26 28" ><path d="M13 0.5L25.4 6.6L13 12.4L0.6 6.6Z" fill="#ad7838"/><path d="M0.6 8.1L12.3 13.7V27.5L0.6 21.8Z" fill="#ad7838"/><path d="M25.4 8.1L13.7 13.7V27.5L25.4 21.8Z" fill="#ad7838"/><path d="M8.9 2.5L21.3 8.5L17.4 10.4L5 4.4Z" fill="#f6f6f6"/></svg>
<span class="t" style="left:97px;top:1019.59px;font-size:26px;line-height:26px;color:#3a3a3a;letter-spacing:1.169px;">swift-crypto</span>
<span class="t" style="left:252.8px;top:1019.59px;font-size:26px;line-height:26px;color:#737373;letter-spacing:0.134px;">3.4.0</span>
<svg style="left:23.5px;top:1849.8px" width="22" height="22" viewBox="0 0 24 24" ><path d="M12 1.6V22.4M1.6 12H22.4" stroke="#4a4a4a" stroke-width="2.7" stroke-linecap="round"/></svg>
<div style="left:56.5px;top:1838px;width:477px;height:43.5px;background:#e7e7e7;border-radius:11px;box-shadow:inset 0 0 0 1.5px #d3d3d3;box-sizing:border-box"></div>
<svg style="left:64px;top:1846.5px" width="54" height="27" viewBox="0 0 54 27" ><rect x="1.3" y="1.3" width="51.4" height="24.4" rx="12.2" fill="none" stroke="#6a6a6a" stroke-width="2"/><path d="M10 9H26M13 13.6H23M15.6 18.2H20.4" stroke="#6a6a6a" stroke-width="2"/><path d="M33.6 11.4L38.6 16L43.6 11.4" fill="none" stroke="#6a6a6a" stroke-width="2.3" stroke-linecap="round" stroke-linejoin="round"/></svg>
<span class="t" style="left:125px;top:1849.38px;font-size:22px;line-height:22px;color:#b1b1b1;letter-spacing:0.435px;">Filter</span>
<svg style="left:461px;top:1846.5px" width="27" height="27" viewBox="0 0 27 27" ><circle cx="13.5" cy="13.5" r="11.6" fill="none" stroke="#6a6a6a" stroke-width="2"/><path d="M13.5 6.6V14.4H8" fill="none" stroke="#6a6a6a" stroke-width="2"/></svg>
<svg style="left:495px;top:1846.5px" width="28" height="27" viewBox="0 0 28 27" ><rect x="1.4" y="1.4" width="25.2" height="24.2" rx="3" fill="none" stroke="#6a6a6a" stroke-width="2"/><path d="M6 13.5H13M9.5 10V17M16 13.5H22" stroke="#6a6a6a" stroke-width="2"/></svg>
<svg style="left:563px;top:92px" width="28" height="26" viewBox="0 0 28 26" ><g fill="none" stroke="#727272" stroke-width="2"><rect x="1.6" y="1.6" width="9.6" height="9" /><rect x="16.4" y="1.6" width="9.6" height="9"/><rect x="1.6" y="15.4" width="9.6" height="9"/><rect x="16.4" y="15.4" width="9.6" height="9"/><path d="M11.2 6H16.4M11.2 20H16.4M6.4 10.6V15.4M21.2 10.6V15.4"/></g></svg>
<div style="left:608px;top:93px;width:2px;height:24px;background:#dcdcdc"></div>
<svg style="left:624.5px;top:90.5px" width="19" height="29" viewBox="0 0 19 29" ><path d="M16 2L3 14.5L16 27" fill="none" stroke="#6a6a6a" stroke-width="2.6" stroke-linecap="round" stroke-linejoin="round"/></svg>
<svg style="left:665px;top:90.5px" width="19" height="29" viewBox="0 0 19 29" ><path d="M3 2L16 14.5L3 27" fill="none" stroke="#b4b4b4" stroke-width="2.6" stroke-linecap="round" stroke-linejoin="round"/></svg>
<div style="left:698px;top:93px;width:2px;height:24px;background:#dcdcdc"></div>
<div style="left:2096px;top:78px;width:362px;height:54px;background:#d7e6fc"></div>
<svg style="left:745.85px;top:94.5px" width="23.3" height="21.01" viewBox="2.38 3.38 18.3 16.5" ><path d="M13.543 3.41c4.114 2.47 6.545 7.162 5.549 11.131-.024.093-.05.181-.076.272l.002.001c2.062 2.538 1.5 5.258 1.236 4.745-1.072-2.086-3.066-1.568-4.088-1.043a6.803 6.803 0 0 1-.281.158l-.02.012-.002.002c-2.115 1.123-4.957 1.205-7.812-.022a12.568 12.568 0 0 1-5.64-4.838c.649.48 1.35.902 2.097 1.252 3.019 1.414 6.051 1.311 8.197-.002C9.651 12.73 7.101 9.67 5.146 7.191a10.628 10.628 0 0 1-1.005-1.384c2.34 2.142 6.038 4.83 7.365 5.576C8.69 8.408 6.208 4.743 6.324 4.86c4.436 4.47 8.528 6.996 8.528 6.996.154.085.27.154.36.214.085-.215.16-.437.224-.668.708-2.588-.09-5.548-1.893-7.992z" fill="#ef7e4d"/></svg>
<span class="t" style="left:781px;top:95.38px;font-size:22px;line-height:22px;color:#262626;letter-spacing:0.213px;">Supabase</span>
<svg style="left:972.15px;top:94.5px" width="23.3" height="21.01" viewBox="2.38 3.38 18.3 16.5" ><path d="M13.543 3.41c4.114 2.47 6.545 7.162 5.549 11.131-.024.093-.05.181-.076.272l.002.001c2.062 2.538 1.5 5.258 1.236 4.745-1.072-2.086-3.066-1.568-4.088-1.043a6.803 6.803 0 0 1-.281.158l-.02.012-.002.002c-2.115 1.123-4.957 1.205-7.812-.022a12.568 12.568 0 0 1-5.64-4.838c.649.48 1.35.902 2.097 1.252 3.019 1.414 6.051 1.311 8.197-.002C9.651 12.73 7.101 9.67 5.146 7.191a10.628 10.628 0 0 1-1.005-1.384c2.34 2.142 6.038 4.83 7.365 5.576C8.69 8.408 6.208 4.743 6.324 4.86c4.436 4.47 8.528 6.996 8.528 6.996.154.085.27.154.36.214.085-.215.16-.437.224-.668.708-2.588-.09-5.548-1.893-7.992z" fill="#ef7e4d"/></svg>
<span class="t" style="left:1006.5px;top:95.38px;font-size:22px;line-height:22px;color:#262626;letter-spacing:0.688px;">StudentsAndCoursesApp</span>
<svg style="left:1357.85px;top:94.5px" width="23.3" height="21.01" viewBox="2.38 3.38 18.3 16.5" ><path d="M13.543 3.41c4.114 2.47 6.545 7.162 5.549 11.131-.024.093-.05.181-.076.272l.002.001c2.062 2.538 1.5 5.258 1.236 4.745-1.072-2.086-3.066-1.568-4.088-1.043a6.803 6.803 0 0 1-.281.158l-.02.012-.002.002c-2.115 1.123-4.957 1.205-7.812-.022a12.568 12.568 0 0 1-5.64-4.838c.649.48 1.35.902 2.097 1.252 3.019 1.414 6.051 1.311 8.197-.002C9.651 12.73 7.101 9.67 5.146 7.191a10.628 10.628 0 0 1-1.005-1.384c2.34 2.142 6.038 4.83 7.365 5.576C8.69 8.408 6.208 4.743 6.324 4.86c4.436 4.47 8.528 6.996 8.528 6.996.154.085.27.154.36.214.085-.215.16-.437.224-.668.708-2.588-.09-5.548-1.893-7.992z" fill="#ef7e4d"/></svg>
<span class="t" style="left:1392.9px;top:95.38px;font-size:22px;line-height:22px;color:#262626;letter-spacing:0.438px;">EnrolmentsView</span>
<svg style="left:1647.55px;top:94.5px" width="23.3" height="21.01" viewBox="2.38 3.38 18.3 16.5" ><path d="M13.543 3.41c4.114 2.47 6.545 7.162 5.549 11.131-.024.093-.05.181-.076.272l.002.001c2.062 2.538 1.5 5.258 1.236 4.745-1.072-2.086-3.066-1.568-4.088-1.043a6.803 6.803 0 0 1-.281.158l-.02.012-.002.002c-2.115 1.123-4.957 1.205-7.812-.022a12.568 12.568 0 0 1-5.64-4.838c.649.48 1.35.902 2.097 1.252 3.019 1.414 6.051 1.311 8.197-.002C9.651 12.73 7.101 9.67 5.146 7.191a10.628 10.628 0 0 1-1.005-1.384c2.34 2.142 6.038 4.83 7.365 5.576C8.69 8.408 6.208 4.743 6.324 4.86c4.436 4.47 8.528 6.996 8.528 6.996.154.085.27.154.36.214.085-.215.16-.437.224-.668.708-2.588-.09-5.548-1.893-7.992z" fill="#ef7e4d"/></svg>
<span class="t" style="left:1682px;top:95.38px;font-size:22px;line-height:22px;color:#262626;letter-spacing:0.65px;">CoursesListView</span>
<svg style="left:1945.85px;top:94.5px" width="23.3" height="21.01" viewBox="2.38 3.38 18.3 16.5" ><path d="M13.543 3.41c4.114 2.47 6.545 7.162 5.549 11.131-.024.093-.05.181-.076.272l.002.001c2.062 2.538 1.5 5.258 1.236 4.745-1.072-2.086-3.066-1.568-4.088-1.043a6.803 6.803 0 0 1-.281.158l-.02.012-.002.002c-2.115 1.123-4.957 1.205-7.812-.022a12.568 12.568 0 0 1-5.64-4.838c.649.48 1.35.902 2.097 1.252 3.019 1.414 6.051 1.311 8.197-.002C9.651 12.73 7.101 9.67 5.146 7.191a10.628 10.628 0 0 1-1.005-1.384c2.34 2.142 6.038 4.83 7.365 5.576C8.69 8.408 6.208 4.743 6.324 4.86c4.436 4.47 8.528 6.996 8.528 6.996.154.085.27.154.36.214.085-.215.16-.437.224-.668.708-2.588-.09-5.548-1.893-7.992z" fill="#ef7e4d"/></svg>
<span class="t" style="left:1980.8px;top:95.38px;font-size:22px;line-height:22px;color:#262626;letter-spacing:0.28px;">Course</span>
<svg style="left:2143.75px;top:94.5px" width="23.3" height="21.01" viewBox="2.38 3.38 18.3 16.5" ><path d="M13.543 3.41c4.114 2.47 6.545 7.162 5.549 11.131-.024.093-.05.181-.076.272l.002.001c2.062 2.538 1.5 5.258 1.236 4.745-1.072-2.086-3.066-1.568-4.088-1.043a6.803 6.803 0 0 1-.281.158l-.02.012-.002.002c-2.115 1.123-4.957 1.205-7.812-.022a12.568 12.568 0 0 1-5.64-4.838c.649.48 1.35.902 2.097 1.252 3.019 1.414 6.051 1.311 8.197-.002C9.651 12.73 7.101 9.67 5.146 7.191a10.628 10.628 0 0 1-1.005-1.384c2.34 2.142 6.038 4.83 7.365 5.576C8.69 8.408 6.208 4.743 6.324 4.86c4.436 4.47 8.528 6.996 8.528 6.996.154.085.27.154.36.214.085-.215.16-.437.224-.668.708-2.588-.09-5.548-1.893-7.992z" fill="#ef7e4d"/></svg>
<span class="t" style="left:2178.5px;top:95.38px;font-size:22px;line-height:22px;color:#2f74f0;letter-spacing:0.731px;">CoursesListViewModel</span>
<svg style="left:2505.65px;top:94.5px" width="23.3" height="21.01" viewBox="2.38 3.38 18.3 16.5" ><path d="M13.543 3.41c4.114 2.47 6.545 7.162 5.549 11.131-.024.093-.05.181-.076.272l.002.001c2.062 2.538 1.5 5.258 1.236 4.745-1.072-2.086-3.066-1.568-4.088-1.043a6.803 6.803 0 0 1-.281.158l-.02.012-.002.002c-2.115 1.123-4.957 1.205-7.812-.022a12.568 12.568 0 0 1-5.64-4.838c.649.48 1.35.902 2.097 1.252 3.019 1.414 6.051 1.311 8.197-.002C9.651 12.73 7.101 9.67 5.146 7.191a10.628 10.628 0 0 1-1.005-1.384c2.34 2.142 6.038 4.83 7.365 5.576C8.69 8.408 6.208 4.743 6.324 4.86c4.436 4.47 8.528 6.996 8.528 6.996.154.085.27.154.36.214.085-.215.16-.437.224-.668.708-2.588-.09-5.548-1.893-7.992z" fill="#ef7e4d"/></svg>
<span class="t" style="left:2540px;top:95.38px;font-size:22px;line-height:22px;color:#262626;letter-spacing:0.789px;">StudentsListView</span>
<div style="left:922.4px;top:93px;width:2px;height:24px;background:#e0e0e0"></div>
<div style="left:1307.9px;top:93px;width:2px;height:24px;background:#e0e0e0"></div>
<div style="left:1597.7px;top:93px;width:2px;height:24px;background:#e0e0e0"></div>
<div style="left:1895.8px;top:93px;width:2px;height:24px;background:#e0e0e0"></div>
<div style="left:2762px;top:93px;width:2px;height:24px;background:#e0e0e0"></div>
<svg style="left:2811.95px;top:94.5px" width="23.3" height="21.01" viewBox="2.38 3.38 18.3 16.5" ><path d="M13.543 3.41c4.114 2.47 6.545 7.162 5.549 11.131-.024.093-.05.181-.076.272l.002.001c2.062 2.538 1.5 5.258 1.236 4.745-1.072-2.086-3.066-1.568-4.088-1.043a6.803 6.803 0 0 1-.281.158l-.02.012-.002.002c-2.115 1.123-4.957 1.205-7.812-.022a12.568 12.568 0 0 1-5.64-4.838c.649.48 1.35.902 2.097 1.252 3.019 1.414 6.051 1.311 8.197-.002C9.651 12.73 7.101 9.67 5.146 7.191a10.628 10.628 0 0 1-1.005-1.384c2.34 2.142 6.038 4.83 7.365 5.576C8.69 8.408 6.208 4.743 6.324 4.86c4.436 4.47 8.528 6.996 8.528 6.996.154.085.27.154.36.214.085-.215.16-.437.224-.668.708-2.588-.09-5.548-1.893-7.992z" fill="#ef7e4d"/></svg>
<div style="left:2832px;top:78px;width:11px;height:54px;background:linear-gradient(90deg,rgba(255,255,255,0),rgba(215,215,215,0.5) 65%,rgba(185,185,185,0.95))"></div>
<div style="left:2843px;top:78px;width:181px;height:54px;background:#fff"></div>
<svg style="left:2859px;top:91px" width="27" height="28" viewBox="0 0 27 28" ><g fill="none" stroke="#727272" stroke-width="2.1" stroke-linecap="round" stroke-linejoin="round"><path d="M6 8.4H24.4M18 2L24.4 8.4L18 14.8"/><path d="M21 19.6H2.6M9 13.2L2.6 19.6L9 26"/></g></svg>
<svg style="left:2905px;top:91px" width="38" height="28" viewBox="0 0 38 28" ><g fill="none" stroke="#727272" stroke-width="2"><path d="M1 2H12.4M1 8H16M1 14H12.4M1 20H16M1 26H16"/><rect x="21.4" y="2" width="14.4" height="24"/><rect x="25.6" y="6.4" width="6" height="15.2"/></g></svg>
<div style="left:2960px;top:93px;width:2px;height:24px;background:#e0e0e0"></div>
<svg style="left:2979px;top:91.5px" width="28" height="27" viewBox="0 0 28 27" ><rect x="1.8" y="1.6" width="24.4" height="23.8" rx="4.6" fill="none" stroke="#727272" stroke-width="2.2"/><path d="M9 1.6V25.4" stroke="#727272" stroke-width="2.1"/><path d="M12.8 13.5H22M17.4 9V18" stroke="#727272" stroke-width="2"/></svg>
<svg style="left:563px;top:147.4px" width="25.4" height="25.4" viewBox="0 0 30 30" ><rect x="0" y="0" width="30" height="30" rx="6.5" fill="#3579f3"/><rect x="2.6" y="2.6" width="24.8" height="24.8" rx="4.2" fill="none" stroke="#fff" stroke-width="1.5"/><g stroke="#fff" stroke-width="2.1" stroke-linecap="round" fill="none"><path d="M16.3 7.6L9.2 20.2"/><path d="M13.4 8.2L21.2 21.8"/><path d="M7 18.6H23"/><path d="M8.2 21.4L7.6 22.4"/></g></svg>
<span class="t" style="left:600.6px;top:151.38px;font-size:22px;line-height:22px;color:#262626;letter-spacing:0.672px;">StudentsAndCourses</span>
<svg style="left:832.6px;top:151.4px" width="7.4" height="19.8" viewBox="0 0 7.4 19.8" ><path d="M1.35 1.35L6.050000000000001 9.9L1.35 18.45" fill="none" stroke="#7e7e7e" stroke-width="2.7" stroke-linecap="round" stroke-linejoin="round"/></svg>
<svg style="left:857.6px;top:150.14px" width="24.8" height="20.52" viewBox="0 0 29 24" ><path d="M0 3.2Q0 0.4 2.8 0.4H8.6Q10.2 0.4 11.2 1.4L12.2 2.4Q12.9 3 14 3H26.2Q29 3 29 5.8V7H0Z" fill="#8c9196"/><path d="M0 8.3H29V20.8Q29 24 25.8 24H3.2Q0 24 0 20.8Z" fill="#8c9196"/></svg>
<span class="t" style="left:894.6px;top:151.38px;font-size:22px;line-height:22px;color:#262626;letter-spacing:0.672px;">StudentsAndCourses</span>
<svg style="left:1126.3px;top:151.4px" width="7.4" height="19.8" viewBox="0 0 7.4 19.8" ><path d="M1.35 1.35L6.050000000000001 9.9L1.35 18.45" fill="none" stroke="#7e7e7e" stroke-width="2.7" stroke-linecap="round" stroke-linejoin="round"/></svg>
<svg style="left:1151.1px;top:150.14px" width="24.8" height="20.52" viewBox="0 0 29 24" ><path d="M0 3.2Q0 0.4 2.8 0.4H8.6Q10.2 0.4 11.2 1.4L12.2 2.4Q12.9 3 14 3H26.2Q29 3 29 5.8V7H0Z" fill="#8c9196"/><path d="M0 8.3H29V20.8Q29 24 25.8 24H3.2Q0 24 0 20.8Z" fill="#8c9196"/></svg>
<span class="t" style="left:1189px;top:151.38px;font-size:22px;line-height:22px;color:#262626;letter-spacing:0.608px;">ViewModels</span>
<svg style="left:1325.8px;top:151.4px" width="7.4" height="19.8" viewBox="0 0 7.4 19.8" ><path d="M1.35 1.35L6.050000000000001 9.9L1.35 18.45" fill="none" stroke="#7e7e7e" stroke-width="2.7" stroke-linecap="round" stroke-linejoin="round"/></svg>
<svg style="left:1351.6px;top:149.6px" width="24.4" height="22.0" viewBox="2.38 3.38 18.3 16.5" ><path d="M13.543 3.41c4.114 2.47 6.545 7.162 5.549 11.131-.024.093-.05.181-.076.272l.002.001c2.062 2.538 1.5 5.258 1.236 4.745-1.072-2.086-3.066-1.568-4.088-1.043a6.803 6.803 0 0 1-.281.158l-.02.012-.002.002c-2.115 1.123-4.957 1.205-7.812-.022a12.568 12.568 0 0 1-5.64-4.838c.649.48 1.35.902 2.097 1.252 3.019 1.414 6.051 1.311 8.197-.002C9.651 12.73 7.101 9.67 5.146 7.191a10.628 10.628 0 0 1-1.005-1.384c2.34 2.142 6.038 4.83 7.365 5.576C8.69 8.408 6.208 4.743 6.324 4.86c4.436 4.47 8.528 6.996 8.528 6.996.154.085.27.154.36.214.085-.215.16-.437.224-.668.708-2.588-.09-5.548-1.893-7.992z" fill="#ef7e4d"/></svg>
<span class="t" style="left:1388.6px;top:151.38px;font-size:22px;line-height:22px;color:#262626;letter-spacing:0.701px;">CoursesListViewModel</span>
<svg style="left:1638px;top:151.4px" width="7.4" height="19.8" viewBox="0 0 7.4 19.8" ><path d="M1.35 1.35L6.050000000000001 9.9L1.35 18.45" fill="none" stroke="#7e7e7e" stroke-width="2.7" stroke-linecap="round" stroke-linejoin="round"/></svg>
<div style="left:1662px;top:146px;width:27.6px;height:27.6px;background:#bd5bd8;border-radius:6.5px"></div>
<span class="t" style="left:1668.2px;top:150.78px;font-size:22px;line-height:22px;color:#ffffff;-webkit-text-stroke:1.0px #ffffff;">C</span>
<span class="t" style="left:1700.8px;top:151.38px;font-size:22px;line-height:22px;color:#262626;letter-spacing:0.701px;">CoursesListViewModel</span>
<div style="left:546px;top:333px;width:2448px;height:44px;background:#edf4fe"></div>
<div style="left:2994px;top:190px;width:30px;height:1642px;background:#fafafa;box-shadow:inset 2px 0 0 #e9e9e9, inset -2px 0 0 #eeeeee"></div>
<div style="left:3002px;top:361px;width:16px;height:1037px;background:#7f7f7f;border-radius:8px"></div>
<div style="left:560px;top:245px;width:10px;height:1496px;background:#b1ccfb;border:2.2px solid #2a6ff5;border-radius:5px;box-sizing:border-box"></div>
<div style="left:652px;top:334.2px;width:14px;height:1404.8px;background:rgba(0,0,0,0.09);border-radius:7px 7px 7px 7px;box-shadow:0 0 0 1px rgba(255,255,255,0.75);"></div>
<div style="left:652px;top:598.2px;width:14px;height:260.8px;background:#d3d3d3;border-radius:7px 7px 7px 7px;box-shadow:0 0 0 1px rgba(255,255,255,0.75);"></div>
<div style="left:652px;top:686.2px;width:14px;height:128.8px;background:#bebebe;border-radius:7px 7px 7px 7px;box-shadow:0 0 0 1px rgba(255,255,255,0.75);"></div>
<div style="left:652px;top:950.2px;width:14px;height:700.8px;background:#d3d3d3;border-radius:7px 7px 7px 7px;box-shadow:0 0 0 1px rgba(255,255,255,0.75);"></div>
<div style="left:652px;top:1038.2px;width:14px;height:416.8px;background:#bebebe;border-radius:7px 7px 0 0;box-shadow:0 0 0 1px rgba(255,255,255,0.75);"></div>
<div style="left:652px;top:1455px;width:14px;height:108px;background:#bebebe;border-radius:0 0 7px 7px;box-shadow:0 0 0 1px rgba(255,255,255,0.75);"></div>
<div style="left:652px;top:1454px;width:14px;height:1.6px;background:#e9e9e9"></div>
<div class="ln" style="top:201px">8</div>
<div class="cl" style="top:201px"><span class="kw">import</span> Foundation</div>
<div class="ln" style="top:245px">9</div>
<div class="ln" style="top:289px">10</div>
<div class="cl" style="top:289px">@Observable</div>
<div class="ln cur" style="top:333px">11</div>
<div class="cl" style="top:333px"><span class="kw">class</span> <span class="tyd">CoursesListViewModel</span>: Observable {</div>
<div class="ln" style="top:377px">12</div>
<div class="ln" style="top:421px">13</div>
<div class="cl" style="top:421px">    <span class="com">// </span><span class="mark">MARK: Stored properties</span></div>
<div class="ln" style="top:465px">14</div>
<div class="cl" style="top:465px">    <span class="kw">var</span> <span class="decl">courses</span>: [<span class="ptype">Course</span>] = []</div>
<div class="ln" style="top:509px">15</div>
<div class="ln" style="top:553px">16</div>
<div class="cl" style="top:553px">    <span class="com">// </span><span class="mark">MARK: Initializer(s)</span></div>
<div class="ln" style="top:597px">17</div>
<div class="cl" style="top:597px">    <span class="kw">init</span>() {</div>
<div class="ln" style="top:641px">18</div>
<div class="cl" style="top:641px">        <span class="com">// Get courses from the database</span></div>
<div class="ln" style="top:685px">19</div>
<div class="cl" style="top:685px">        <span class="ocls">Task</span> {</div>
<div class="ln" style="top:729px">20</div>
<div class="cl" style="top:729px">            <span class="kw">try</span> <span class="kw">await</span> <span class="pfn">getCourses</span>()</div>
<div class="ln" style="top:773px">21</div>
<div class="cl" style="top:773px">        }</div>
<div class="ln" style="top:817px">22</div>
<div class="cl" style="top:817px">    }</div>
<div class="ln" style="top:861px">23</div>
<div class="ln" style="top:905px">24</div>
<div class="cl" style="top:905px">    <span class="com">// </span><span class="mark">MARK: Functions</span></div>
<div class="ln" style="top:949px">25</div>
<div class="cl" style="top:949px">    <span class="kw">func</span> <span class="decl">getCourses</span>() <span class="kw">async</span> <span class="kw">throws</span> {</div>
<div class="ln" style="top:993px">26</div>
<div class="ln" style="top:1037px">27</div>
<div class="cl" style="top:1037px">        <span class="kw">do</span> {</div>
<div class="ln" style="top:1081px">28</div>
<div class="cl" style="top:1081px">            <span class="kw">let</span> results: [<span class="ptype">Course</span>] = <span class="kw">try</span> <span class="kw">await</span> <span class="pfn">supabase</span></div>
<div class="ln" style="top:1125px">29</div>
<div class="cl" style="top:1125px">                .from(<span class="str">&quot;course&quot;</span>)</div>
<div class="ln" style="top:1169px">30</div>
<div class="cl" style="top:1169px">                .<span class="ofn">select</span>()</div>
<div class="ln" style="top:1213px">31</div>
<div class="cl" style="top:1213px">                .execute()</div>
<div class="ln" style="top:1257px">32</div>
<div class="cl" style="top:1257px">                .<span class="ofn">value</span></div>
<div class="ln" style="top:1301px">33</div>
<div class="ln" style="top:1345px">34</div>
<div class="cl" style="top:1345px">            <span class="kw">self</span>.<span class="pfn">courses</span> = results</div>
<div class="ln" style="top:1389px">35</div>
<div class="ln" style="top:1433px">36</div>
<div class="cl" style="top:1433px">        } <span class="kw">catch</span> {</div>
<div class="ln" style="top:1477px">37</div>
<div class="cl" style="top:1477px">            <span class="ofn">debugPrint</span>(error)</div>
<div class="ln" style="top:1521px">38</div>
<div class="cl" style="top:1521px">        }</div>
<div class="ln" style="top:1565px">39</div>
<div class="ln" style="top:1609px">40</div>
<div class="cl" style="top:1609px">    }</div>
<div class="ln" style="top:1653px">41</div>
<div class="ln" style="top:1697px">42</div>
<div class="cl" style="top:1697px">}</div>
<div class="ln" style="top:1741px">43</div>
<svg style="left:568px;top:1851.5px" width="31" height="19" viewBox="0 0 31 19" ><path d="M4 0.3H22.4Q24.4 0.3 25.6 1.8L30 7.6Q31 9.5 30 11.4L25.6 17.2Q24.4 18.7 22.4 18.7H4Q0.3 18.7 0.3 15V4Q0.3 0.3 4 0.3Z" fill="#3478f6"/></svg>
<div style="left:614px;top:1850px;width:2px;height:23px;background:#dedede"></div>
<div style="left:856px;top:1850px;width:2px;height:23px;background:#dedede"></div>
<div style="left:1037.8px;top:1850px;width:2px;height:23px;background:#dedede"></div>
<svg style="left:636px;top:1847.5px" width="20" height="27" viewBox="0 0 20 27" ><g fill="none" stroke="#727272" stroke-width="1.8"><rect x="1.4" y="1.2" width="4.6" height="24.6" rx="1"/><rect x="13.6" y="1.2" width="4.6" height="24.6" rx="1"/></g></svg>
<svg style="left:692px;top:1850px" width="28" height="24" viewBox="0 0 28 24" ><g fill="none" stroke="#c2c2c2" stroke-width="2"><path d="M1.4 14.4L14 2.4L26.4 14.4"/><path d="M26.4 6.8V14.4H19"/><rect x="6.4" y="18.6" width="15.6" height="4"/></g></svg>
<svg style="left:756px;top:1847.5px" width="20" height="27" viewBox="0 0 20 27" ><g fill="none" stroke="#c2c2c2" stroke-width="2"><path d="M10 1V17.6M2.8 10.8L10 17.8L17.2 10.8"/><rect x="1.4" y="21.6" width="17.2" height="4"/></g></svg>
<svg style="left:816px;top:1847.5px" width="20" height="27" viewBox="0 0 20 27" ><g fill="none" stroke="#c2c2c2" stroke-width="2"><path d="M10 18.4V1.8M2.8 8.8L10 1.6L17.2 8.8"/><rect x="1.4" y="21.6" width="17.2" height="4"/></g></svg>
<svg style="left:876px;top:1847px" width="24" height="28" viewBox="0 0 24 28" ><g fill="none" stroke="#727272" stroke-width="2" stroke-linejoin="round" stroke-linecap="round"><path d="M9.6 13.3L22.3 6.6V20.7L9.6 27.2Z"/><path d="M18.2 4.4L5.6 10.7V24.4"/><path d="M14.1 1.4L1.6 7.5V21.8"/></g></svg>
<svg style="left:934px;top:1847px" width="28" height="27" viewBox="0 0 28 27" ><g fill="none" stroke="#727272" stroke-width="2.1"><circle cx="5.6" cy="5" r="3.9"/><circle cx="5.6" cy="22" r="3.9"/><circle cx="22.6" cy="13.5" r="3.9"/><path d="M9.2 6.8L19 11.7M9.2 20.2L19 15.3"/></g></svg>
<svg style="left:996.6px;top:1847px" width="22.6" height="26" viewBox="0 0 24 27" ><g fill="none" stroke="#727272" stroke-width="2"><rect x="1.2" y="1.4" width="21.6" height="10.4" rx="5.2"/><rect x="1.2" y="15.2" width="21.6" height="10.4" rx="5.2"/></g><circle cx="6.8" cy="6.6" r="2.9" fill="#727272"/><circle cx="17.2" cy="20.4" r="2.9" fill="#727272"/></svg>
<svg style="left:1058px;top:1849px" width="23.2" height="23.2" viewBox="0 0 30 30" ><rect x="0" y="0" width="30" height="30" rx="6" fill="#7e7e7e"/><g stroke="#fff" stroke-width="2.1" stroke-linecap="round" fill="none"><path d="M16.3 7.6L9.2 20.2"/><path d="M13.4 8.2L21.2 21.8"/><path d="M7 18.6H23"/><path d="M8.2 21.4L7.6 22.4"/></g></svg>
<span class="t" style="left:1094px;top:1851.38px;font-size:22px;line-height:22px;color:#262626;letter-spacing:0.716px;">StudentsAndCourses</span>
<span class="t" style="left:2774.8px;top:1849.83px;font-size:23px;line-height:23px;color:#7e7e7e;letter-spacing:0.418px;-webkit-text-stroke:0.45px #7e7e7e;">Line: 11  Col: 5</span>
<div style="left:2954px;top:1850px;width:2px;height:23px;background:#e0e0e0"></div>
<svg style="left:2972.8px;top:1847.5px" width="26.2" height="26.6" viewBox="0 0 27 27" ><rect x="1.4" y="1.4" width="24.2" height="24.2" rx="5" fill="none" stroke="#727272" stroke-width="2.2"/><rect x="5" y="17" width="17" height="5.4" rx="1.6" fill="#727272"/></svg>
</div></body></html>
